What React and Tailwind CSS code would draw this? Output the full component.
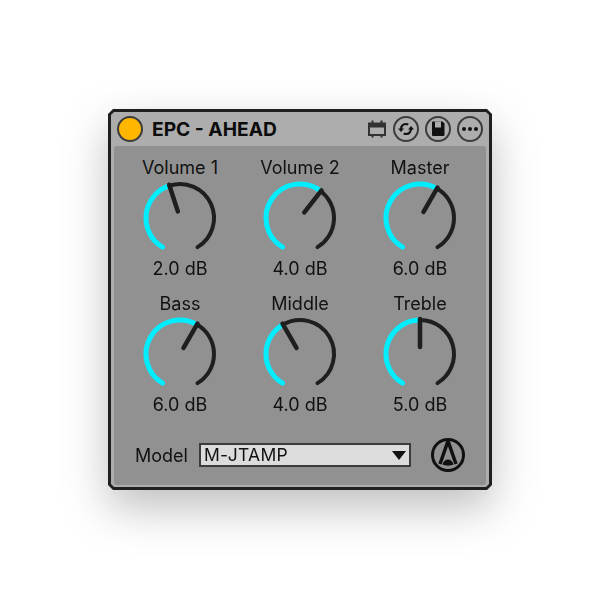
import React from 'react';

const knobs = [
  { label: 'Volume 1', value: '2.0 dB', angle: -18 },
  { label: 'Volume 2', value: '4.0 dB', angle: 38 },
  { label: 'Master', value: '6.0 dB', angle: 30 },
  { label: 'Bass', value: '6.0 dB', angle: 30 },
  { label: 'Middle', value: '4.0 dB', angle: -30 },
  { label: 'Treble', value: '5.0 dB', angle: 0 },
];

const polar = (r, deg) => {
  const a = (deg * Math.PI) / 180;
  return [40 + r * Math.sin(a), 40 - r * Math.cos(a)];
};

const arc = (r, from, to) => {
  const [x1, y1] = polar(r, from);
  const [x2, y2] = polar(r, to);
  return `M${x1} ${y1}A${r} ${r} 0 ${to - from > 180 ? 1 : 0} 1 ${x2} ${y2}`;
};

const Knob = ({ label, value, angle }) => {
  const [ix, iy] = polar(7, angle);
  const [ox, oy] = polar(35, angle);
  return (
    <div className="flex flex-col items-center w-[120px]">
      <div className="text-[18px] leading-[20px] text-[#111111]">{label}</div>
      <svg width="80" height="80" viewBox="0 0 80 80" fill="none">
        <path d={arc(34, -149, angle)} stroke="#00eeff" strokeWidth="5" strokeLinecap="round" />
        <path d={arc(34, angle, 149)} stroke="#1f1f1f" strokeWidth="4" strokeLinecap="round" />
        <line x1={ix} y1={iy} x2={ox} y2={oy} stroke="#1f1f1f" strokeWidth="4.5" strokeLinecap="round" />
      </svg>
      <div className="mt-[1px] text-[18px] leading-[20px] text-[#111111]">{value}</div>
    </div>
  );
};

export default function App() {
  return (
    <div className="w-[600px] h-[600px] bg-white flex items-start justify-center pt-[109px] overflow-hidden font-['Inter',sans-serif]">
      <div className="[filter:drop-shadow(0_18px_22px_rgba(0,0,0,0.25))]">
        <div className="w-[384px] h-[381px] bg-[#1f1f1f] p-[3px] [clip-path:polygon(5px_0,379px_0,384px_5px,384px_376px,379px_381px,5px_381px,0_376px,0_5px)]">
          <div className="w-full h-full bg-[#adadad] flex flex-col px-[3px] pb-[2px] [clip-path:polygon(3px_0,375px_0,378px_3px,378px_372px,375px_375px,3px_375px,0_372px,0_3px)]">
            <div className="h-[34px] flex items-center shrink-0 pl-[3px] pr-[3px]">
              <div className="w-[26px] h-[26px] rounded-full bg-[#ffb600] border-2 border-[#3c3c3c]" />
              <div className="ml-[9px] mt-[1px] font-bold text-[19.2px] text-[#0c0c0c]">EPC - AHEAD</div>
              <div className="ml-auto flex items-center gap-[6px]">
                <svg width="20" height="20" viewBox="0 0 20 20" fill="none">
                  <rect x="2" y="4.5" width="16" height="11.5" fill="none" stroke="#333333" strokeWidth="2" />
                  <rect x="2" y="4.5" width="16" height="4" fill="#333333" />
                  <path d="M5.5 1.5v3M14.5 1.5v3M5.5 16v2.5M14.5 16v2.5" stroke="#333333" strokeWidth="2" />
                </svg>
                <div className="w-[26px] h-[26px] rounded-full border-2 border-[#3c3c3c] flex items-center justify-center">
                  <svg width="18" height="18" viewBox="0 0 18 18" fill="none" stroke="#111111" strokeWidth="2.2">
                    <path d="M4 10c-.5-3.2 1.8-6 4.8-6 1 0 1.7.2 2.4.7" />
                    <path d="M14 8c.5 3.2-1.8 6-4.8 6-1 0-1.7-.2-2.4-.7" />
                    <path d="M1 8.5L4 12l3-3.5z" fill="#111111" stroke="none" />
                    <path d="M11 9.5L14 6l3 3.5z" fill="#111111" stroke="none" />
                  </svg>
                </div>
                <div className="w-[26px] h-[26px] rounded-full border-2 border-[#3c3c3c] flex items-center justify-center">
                  <svg width="18" height="18" viewBox="0 0 18 18">
                    <path d="M3 2.5q0-1 1-1h9.5l2 2v11.5q0 1-1 1H4q-1 0-1-1z" fill="#111111" />
                    <rect x="6" y="1.5" width="6" height="6" fill="#adadad" />
                  </svg>
                </div>
                <div className="w-[26px] h-[26px] rounded-full border-2 border-[#3c3c3c] flex items-center justify-center gap-[2px]">
                  <div className="w-[4px] h-[4px] rounded-full bg-[#111111]" />
                  <div className="w-[4px] h-[4px] rounded-full bg-[#111111]" />
                  <div className="w-[4px] h-[4px] rounded-full bg-[#111111]" />
                </div>
              </div>
            </div>
            <div className="flex-1 bg-[#919191] rounded-[3px] flex flex-col px-[6px] pt-[12px]">
              <div className="grid grid-cols-3 gap-y-[15px]">
                {knobs.map((k) => (
                  <Knob key={k.label} {...k} />
                ))}
              </div>
              <div className="flex items-center mt-[22px] pl-[15px]">
                <span className="w-[64px] text-[18px] text-[#111111]">Model</span>
                <div className="w-[212px] h-[24px] bg-[#dcdcdc] border-2 border-[#3c3c3c] flex items-center justify-between pl-[3px] pr-[3px] text-[17.5px] tracking-[0.3px] text-[#111111]">
                  M-JTAMP
                  <div className="w-0 h-0 border-l-[7px] border-r-[7px] border-t-[9px] border-l-transparent border-r-transparent border-t-[#111111]" />
                </div>
                <svg width="36" height="36" viewBox="0 0 36 36" fill="none" className="ml-[19px]">
                  <circle cx="18" cy="18" r="15.5" stroke="#111111" strokeWidth="3" />
                  <path d="M18 4L10 27M18 4L26 27" stroke="#111111" strokeWidth="3.5" />
                  <path d="M12.5 27.5c1-3.5 3-5 5.500-5s4.500 1.500 5.500 5c-3 1.500-8 1.500-11 0z" fill="#111111" />
                </svg>
              </div>
            </div>
          </div>
        </div>
      </div>
    </div>
  );
}
